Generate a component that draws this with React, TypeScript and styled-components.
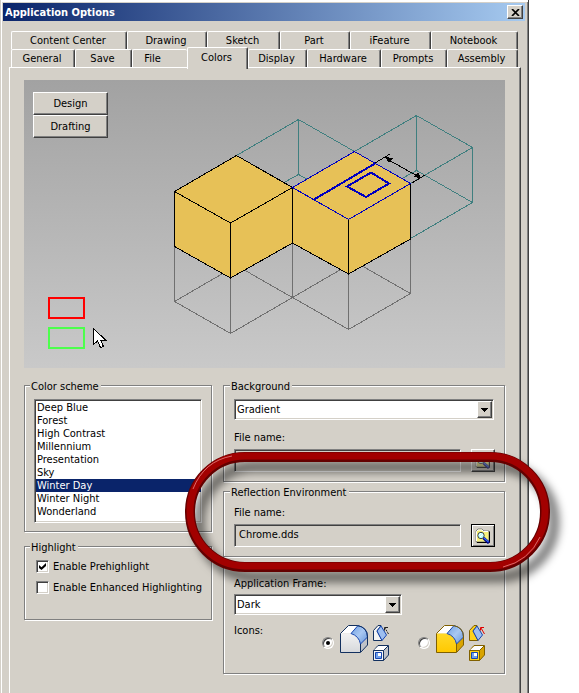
import React from 'react';
import styled, { createGlobalStyle } from 'styled-components';

const FACE = '#d4d0c8';
const SHADOW = '#808080';
const DARK = '#404040';
const NAVY = '#0a246a';

const GlobalStyle = createGlobalStyle`
  * { box-sizing: border-box; }
  body {
    margin: 0;
    background: #fff;
    color: #000;
    font: 11px/13px Tahoma, "DejaVu Sans Condensed", "DejaVu Sans", sans-serif;
  }
  button, input, select { font: inherit; color: inherit; margin: 0; }
`;

const Page = styled.main`
  min-height: 100vh;
  height: 100vh;
  padding-right: 50px;
  overflow: hidden;
`;

const Dialog = styled.section`
  position: relative;
  min-height: 100%;
  padding: 3px;
  background: ${FACE};
  border-right: 1px solid ${DARK};
  box-shadow: inset 1px 0 0 ${FACE}, inset 2px 2px 0 #fff, inset -1px 0 0 ${SHADOW};
`;

const TitleBar = styled.header`
  display: flex;
  align-items: center;
  justify-content: space-between;
  height: 18px;
  padding: 0 2px;
  background: linear-gradient(90deg, ${NAVY}, #a6caf0);
`;

const Title = styled.h1`
  margin: 0;
  color: #fff;
  font-size: 11px;
  line-height: 13px;
  font-weight: bold;
`;

const PushButton = styled.button`
  display: flex;
  align-items: center;
  justify-content: center;
  padding: 0;
  background: ${FACE};
  border: 1px solid;
  border-color: #fff ${DARK} ${DARK} #fff;
  border-radius: 0;
  box-shadow: inset -1px -1px 0 ${SHADOW};
`;

const CloseButton = styled(PushButton)`
  width: 16px;
  height: 14px;
`;

const Tabs = styled.div`
  padding: 10px 7px 0 8px;
`;

const TabRow = styled.div<{ $widths: number[] }>`
  display: grid;
  grid-template-columns: ${p => p.$widths.map(w => `minmax(0, ${w}fr)`).join(' ')};
  height: 18px;
`;

const Tab = styled.button<{ $selected?: boolean; $tail?: number }>`
  position: relative;
  z-index: ${p => (p.$selected ? 1 : 0)};
  min-width: 0;
  height: ${p => (p.$selected ? 22 : 18)}px;
  margin-top: ${p => (p.$selected ? -2 : 0)}px;
  padding: 0 ${p => p.$tail ?? 2}px ${p => (p.$selected ? 3 : 0)}px 0;
  white-space: nowrap;
  background: ${FACE};
  border: solid;
  border-width: 1px ${p => (p.$tail ? 0 : 1)}px 0 1px;
  border-color: #fff ${DARK} #fff #fff;
  border-radius: 2px 2px 0 0;
  box-shadow: ${p => (p.$tail ? 'none' : `inset -1px 0 0 ${SHADOW}`)};
`;

const Panel = styled.div`
  min-height: calc(100vh - 67px);
  margin: 0 4px 0 6px;
  padding: 12px 15px 19px 14px;
  border: solid;
  border-width: 1px 1px 0 1px;
  border-color: #fff ${DARK} #fff #fff;
  box-shadow: inset -1px 0 0 ${SHADOW};
`;

const Preview = styled.div`
  position: relative;
  height: 288px;
  padding: 12px 9px;
  background: linear-gradient(#a2a2a2, #c9c9c9);
`;

const Drawing = styled.svg`
  position: absolute;
  inset: 0;
  width: 100%;
  height: 100%;
`;

const ModeButtons = styled.div`
  position: relative;
  display: flex;
  flex-direction: column;
  width: 75px;
`;

const ModeButton = styled(PushButton)`
  height: 23px;
`;

const Columns = styled.div`
  display: grid;
  grid-template-columns: minmax(0, 188fr) minmax(0, 282fr);
  gap: 11px;
  margin-top: 11px;
`;

const Column = styled.div<{ $gap: number }>`
  display: flex;
  flex-direction: column;
  gap: ${p => p.$gap}px;
`;

const Group = styled.fieldset`
  min-width: 0;
  margin: 0;
  padding: 7px 10px 9px 10px;
  border: 1px solid ${SHADOW};
  box-shadow: 1px 1px 0 #fff, inset 1px 1px 0 #fff;
`;

const SchemeGroup = styled(Group)`
  padding: 7px 9px 8px;
`;

const FrameGroup = styled(Group)`
  margin-top: 6px;
  padding: 9px 10px 11px;
`;

const Legend = styled.legend`
  height: 13px;
  line-height: 15px;
  margin-left: -4px;
  padding: 0 2px 0 1px;
  background: ${FACE};
`;

const sunken = `
  border: 1px solid;
  border-color: ${SHADOW} #fff #fff ${SHADOW};
  border-radius: 0;
  outline: 0;
`;

const SchemeList = styled.select`
  display: block;
  width: 100%;
  height: 124px;
  padding: 1px 0 0 1px;
  overflow: hidden;
  background: #fff;
  ${sunken}
  box-shadow: inset 1px 1px 0 ${DARK}, inset -1px -1px 0 ${FACE};

  option {
    height: 13px;
    min-height: 13px;
    padding: 0 1px;
    line-height: 13px;
    color: #000;
  }
  option:checked {
    background: ${NAVY} linear-gradient(${NAVY}, ${NAVY});
    color: #fff;
    -webkit-text-fill-color: #fff;
  }
`;

const Checks = styled.div`
  display: flex;
  flex-direction: column;
  gap: 8px;
  min-height: 51px;
  margin-left: 2px;
`;

const CheckLabel = styled.label`
  display: flex;
  align-items: center;
  gap: 4px;
  height: 13px;
  white-space: nowrap;
`;

const CheckBox = styled.input`
  appearance: none;
  display: grid;
  place-items: center;
  flex: none;
  width: 13px;
  height: 13px;
  background: #fff;
  ${sunken}
  box-shadow: inset 1px 1px 0 ${DARK}, inset -1px -1px 0 ${FACE};

  &:checked::after {
    content: '';
    width: 7px;
    height: 7px;
    background: #000;
    clip-path: polygon(0 29%, 36% 60%, 100% 0, 100% 43%, 36% 100%, 0 71%);
  }
`;

const SelectBox = styled.div<{ $w?: number }>`
  position: relative;
  width: ${p => (p.$w ? `${p.$w}px` : '100%')};
  height: 21px;
`;

const Select = styled.select`
  appearance: none;
  display: block;
  width: 100%;
  height: 100%;
  padding: 0 20px 0 2px;
  background: #fff;
  ${sunken}
  box-shadow: inset 1px 1px 0 ${DARK}, inset -1px -1px 0 ${FACE};
`;

const SelectArrow = styled.span`
  position: absolute;
  top: 2px;
  right: 2px;
  bottom: 2px;
  display: grid;
  place-items: center;
  width: 15px;
  background: ${FACE};
  border: 1px solid;
  border-color: #fff ${DARK} ${DARK} #fff;
  box-shadow: inset -1px -1px 0 ${SHADOW};
  pointer-events: none;
`;

const FieldLabel = styled.label<{ $top?: number; $bottom?: number }>`
  display: block;
  height: 14px;
  line-height: 15px;
  margin: ${p => p.$top ?? 0}px 0 ${p => p.$bottom ?? 5}px;
`;

const FileRow = styled.div`
  display: flex;
  gap: 10px;
  height: 23px;
  margin-right: -1px;
`;

const FileInput = styled.input`
  flex: 1;
  min-width: 0;
  padding: 0 4px 2px;
  background: ${FACE};
  ${sunken}
  box-shadow: inset 1px 1px 0 ${DARK};
`;

const BrowseButton = styled(PushButton)<{ $default?: boolean }>`
  width: 24px;
  ${p =>
    p.$default
      ? `border-color: #000; box-shadow: inset 1px 1px 0 #fff, inset -1px -1px 0 ${SHADOW};`
      : 'color: #808080;'}
`;

const IconsRow = styled.div`
  display: flex;
  align-items: flex-start;
  margin-top: 9px;
`;

const IconsCaption = styled.span`
  flex: none;
  width: 88px;
`;

const IconChoice = styled.label`
  display: flex;
  flex: none;
  align-items: center;
  gap: 6px;
  height: 38px;

  & + & {
    margin-left: 28px;
  }
`;

const Radio = styled.input`
  appearance: none;
  display: grid;
  place-items: center;
  flex: none;
  width: 12px;
  height: 12px;
  background: #fff;
  border: 1px solid;
  border-color: ${SHADOW} #fff #fff ${SHADOW};
  border-radius: 50%;
  box-shadow: inset 1px 1px 0 ${DARK}, inset -1px -1px 0 ${FACE};

  &:checked::after {
    content: '';
    width: 4px;
    height: 4px;
    border-radius: 50%;
    background: #000;
  }
`;

const Callout = styled.svg`
  position: absolute;
  top: 440px;
  left: 170px;
  width: calc(100% - 133px);
  height: 160px;
  overflow: visible;
  pointer-events: none;
`;

function CloseGlyph() {
  return (
    <svg width="9" height="7" viewBox="0 0 9 7" aria-hidden="true">
      <path d="M1 0L8 7M8 0L1 7" stroke="#000" strokeWidth="1.7" />
    </svg>
  );
}

function BrowseGlyph({ muted }: { muted?: boolean }) {
  return (
    <svg width="16" height="16" viewBox="0 0 16 16" opacity={muted ? 0.6 : 1} aria-hidden="true">
      <path d="M1 14V3l2-2h4l2 2h5v11z" fill="#f7f17a" stroke={SHADOW} />
      <path d="M1.5 13V3.5L3 2h4l1.500 1.500H13" fill="none" stroke="#fff" />
      <path d="M14.500 3.500v11H2" fill="none" stroke="#000" />
      <circle cx="6" cy="7.500" r="3.200" fill="#b9ffff" stroke={DARK} />
      <path d="M4 7l2-2M5 9l3-3" stroke="#fff" />
      <path d="M8.500 10L14 15" stroke="#000080" strokeWidth="3" />
      <path d="M9 10l4.500 4" stroke="#2f6bff" strokeWidth="1.200" />
    </svg>
  );
}

function ModelIcons({ amber }: { amber?: boolean }) {
  const id = amber ? 'amber' : 'silver';
  const line = amber ? '#806000' : '#12305f';
  const side = amber ? '#d9a400' : '#bfc2c8';
  const pale = amber ? '#ffd21a' : '#f4f4f4';
  const arrow = amber ? '#e00000' : '#222';
  return (
    <svg width="50" height="38" viewBox="0 0 50 38" aria-hidden="true">
      <defs>
        <linearGradient id={`${id}-front`} x1="0" y1="0" x2="0" y2="1">
          <stop offset="0" stopColor={amber ? '#ffd92a' : '#f2f2f2'} />
          <stop offset="1" stopColor={amber ? '#ffc800' : '#d6d8db'} />
        </linearGradient>
        <linearGradient id={`${id}-round`} x1="0" y1="0" x2="1" y2="1">
          <stop offset="0" stopColor="#6e9ee0" />
          <stop offset=".5" stopColor="#a9c8f2" />
          <stop offset="1" stopColor="#6796da" />
        </linearGradient>
      </defs>
      <path d="M.5 9.500L8.500 1.500H18L12 9.500z" fill="#fff" />
      <path d="M20.500 20L27.500 13v8l-7 7.500z" fill={side} />
      <path d="M.5 9.500H9Q20.500 10.500 20.500 21v7.500H.5z" fill={`url(#${id}-front)`} />
      <path d="M11 9.500L18 1.500Q27.500 4 27.500 13L20.500 20Q19 12 11 9.500z" fill={`url(#${id}-round)`} stroke="#1746b0" />
      <path d="M.5 28.500V9.500L8.500 1.500H17Q27.500 3 27.500 13v8l-7 7.500z" fill="none" stroke={line} />
      <path d="M20.500 28V20" stroke={line} />
      <path d="M33.500 16.500V6.500L38 1.500H41L37 7L42 16.500z" fill={pale} stroke={line} />
      <path d="M37 7L41 2L46.500 11L42 16.500z" fill="#9dbef0" stroke="#1746b0" />
      <path d="M48.500 10L45 4" stroke={arrow} strokeDasharray={amber ? undefined : '2 1'} />
      <path d="M44.500 6.500V3.500H48" fill="none" stroke={arrow} />
      <path d="M33.500 26.500L38 21.500H48.500V31L43.500 36.500z" fill={side} stroke={line} />
      <path d="M34 26L38.500 22H48L44 26z" fill="#fff" />
      <path d="M33.500 26.500h10v10h-10z" fill={pale} stroke={line} />
      <path d="M43.500 26.500L48 22" stroke={line} />
      <path d="M35.500 28.500h6v6h-6z" fill="#6fa0ec" stroke="#1746b0" />
      <path d="M38 29h3v3h-3z" fill="#fff" />
    </svg>
  );
}

function PreviewDrawing() {
  return (
    <Drawing viewBox="24 80 481 288" preserveAspectRatio="xMidYMid meet" shapeRendering="crispEdges" fill="none" aria-hidden="true">
      <g stroke="#707070">
        <path d="M174.500 246V301.500L230.500 333.500L292.500 297.500L354.500 261.500L410.500 293.500V239" />
        <path d="M174.500 301.500L236.500 265.500L292.500 297.500L348.500 329.500L410.500 293.500" />
        <path d="M230.500 278V333M292.500 243V298M348.500 274V329" />
      </g>
      <g stroke="#3f7f7f">
        <path d="M236.500 155.500L298.500 119.500L354.500 151.500L416.500 115.500L472.500 147.500V202.500L410.500 238.500" />
        <path d="M298.500 119.500V174.500M285 182L298.500 174.500L307 179" />
        <path d="M416.500 115.500V170.500M403 178L416.500 170.500L472.500 202.500M472.500 147.500L410.500 183.500" />
      </g>
      <path d="M236.500 155.500L292.500 187.500L354.500 151.500L410.500 183.500V239L348.500 274L292.500 243L230.500 278L174.500 246.500V191.500z" fill="#e7c157" />
      <g stroke="#000">
        <path d="M236.500 155.500L174.500 191.500V246.500L230.500 278L292.500 243V187.500z" />
        <path d="M174.500 191.500L230.500 223L292.500 187.500M230.500 223V278" />
        <path d="M292.500 243L348.500 274L410.500 239V183.500M348.500 219V274" />
        <path d="M375 163L390 154M412 183L425 175M387 159L419 177" />
      </g>
      <path d="M385 157l8 1-4 5zM421 178l-8-1 5-5z" fill="#000" />
      <path d="M292.500 187.500L354.500 151.500L410.500 183.500L348.500 219.500z" stroke="#0000c0" />
      <path d="M314 199.500L375 163.500M347 186.500L371 172.500L389 183.500L366 197z" stroke="#0000c0" strokeWidth="2" />
      <path d="M49 298h35v20H49z" stroke="#f00" strokeWidth="2" />
      <path d="M49 328h35v20H49z" stroke="#4cff4c" strokeWidth="2" />
      <path d="M93.500 328.500v16l4-3.500 3 6.500 3-1-3-6.500h5z" fill="#fff" stroke="#000" />
    </Drawing>
  );
}

function CalloutRing() {
  return (
    <Callout aria-hidden="true">
      <defs>
        <filter id="ring-shadow" x="-10%" y="-20%" width="125%" height="150%">
          <feGaussianBlur stdDeviation="4" />
        </filter>
        <filter id="ring-edge" x="-5%" y="-10%" width="110%" height="120%">
          <feGaussianBlur stdDeviation="0.7" />
        </filter>
      </defs>
      <svg x="20" y="17" width="calc(100% - 40px)" height="110" overflow="visible" fill="none">
        <rect x="9" y="10" width="100%" height="110" rx="55" stroke="#000" strokeOpacity=".5" strokeWidth="11" filter="url(#ring-shadow)" />
        <rect width="100%" height="110" rx="55" stroke="#640000" strokeWidth="10" />
        <rect y="-1" width="100%" height="110" rx="55" stroke="#a20000" strokeWidth="7" filter="url(#ring-edge)" />
        <path d="M3 32Q14 4 42 -1" stroke="#ffb0b0" strokeWidth="1" opacity=".6" />
        <svg x="100%" overflow="visible">
          <path d="M-5 80Q-16 104 -42 110" stroke="#ffb0b0" strokeWidth="1" opacity=".6" />
        </svg>
      </svg>
    </Callout>
  );
}

function Dropdown({ id, value, width }: { id?: string; value: string; width?: number }) {
  return (
    <SelectBox $w={width}>
      <Select id={id} defaultValue={value} aria-label={id ? undefined : 'Background'}>
        <option>{value}</option>
      </Select>
      <SelectArrow>
        <svg width="7" height="4" viewBox="0 0 7 4" shapeRendering="crispEdges" aria-hidden="true">
          <path d="M0 0h7L3.500 4z" />
        </svg>
      </SelectArrow>
    </SelectBox>
  );
}

const schemes = ['Deep Blue', 'Forest', 'High Contrast', 'Millennium', 'Presentation', 'Sky', 'Winter Day', 'Winter Night', 'Wonderland'];

interface TabInfo {
  name: string;
  w: number;
  tail?: number;
  selected?: boolean;
}

const tabRows: TabInfo[][] = [
  [
    { name: 'Content Center', w: 116 },
    { name: 'Drawing', w: 80 },
    { name: 'Sketch', w: 73 },
    { name: 'Part', w: 70 },
    { name: 'iFeature', w: 81 },
    { name: 'Notebook', w: 87 },
  ],
  [
    { name: 'General', w: 64 },
    { name: 'Save', w: 57 },
    { name: 'File', w: 55, tail: 15 },
    { name: 'Colors', w: 61, selected: true },
    { name: 'Display', w: 59 },
    { name: 'Hardware', w: 74 },
    { name: 'Prompts', w: 66 },
    { name: 'Assembly', w: 71 },
  ],
];

export default function App() {
  return (
    <Page>
      <GlobalStyle />
      <Dialog aria-label="Application Options">
        <TitleBar>
          <Title>Application Options</Title>
          <CloseButton aria-label="Close">
            <CloseGlyph />
          </CloseButton>
        </TitleBar>

        <Tabs role="tablist">
          {tabRows.map(row => (
            <TabRow key={row[0].name} $widths={row.map(t => t.w)}>
              {row.map(t => (
                <Tab key={t.name} role="tab" aria-selected={!!t.selected} $selected={t.selected} $tail={t.tail}>
                  {t.name}
                </Tab>
              ))}
            </TabRow>
          ))}
        </Tabs>

        <Panel role="tabpanel">
          <Preview>
            <PreviewDrawing />
            <ModeButtons>
              <ModeButton>Design</ModeButton>
              <ModeButton>Drafting</ModeButton>
            </ModeButtons>
          </Preview>

          <Columns>
            <Column $gap={8}>
              <SchemeGroup>
                <Legend>Color scheme</Legend>
                <SchemeList size={9} defaultValue="Winter Day" aria-label="Color scheme">
                  {schemes.map(s => <option key={s}>{s}</option>)}
                </SchemeList>
              </SchemeGroup>
              <SchemeGroup>
                <Legend>Highlight</Legend>
                <Checks>
                  <CheckLabel><CheckBox type="checkbox" defaultChecked />Enable Prehighlight</CheckLabel>
                  <CheckLabel><CheckBox type="checkbox" />Enable Enhanced Highlighting</CheckLabel>
                </Checks>
              </SchemeGroup>
            </Column>

            <Column $gap={3}>
              <Group>
                <Legend>Background</Legend>
                <Dropdown value="Gradient" />
                <FieldLabel htmlFor="bg-file" $top={10}>File name:</FieldLabel>
                <FileRow>
                  <FileInput id="bg-file" readOnly />
                  <BrowseButton aria-label="Browse background file" disabled><BrowseGlyph muted /></BrowseButton>
                </FileRow>
              </Group>
              <Group>
                <Legend>Reflection Environment</Legend>
                <FieldLabel htmlFor="env-file">File name:</FieldLabel>
                <FileRow>
                  <FileInput id="env-file" readOnly defaultValue="Chrome.dds" />
                  <BrowseButton aria-label="Browse environment file" $default><BrowseGlyph /></BrowseButton>
                </FileRow>
              </Group>
              <FrameGroup>
                <FieldLabel htmlFor="app-frame" $bottom={4}>Application Frame:</FieldLabel>
                <Dropdown id="app-frame" value="Dark" width={168} />
                <IconsRow role="radiogroup" aria-labelledby="icons-caption">
                  <IconsCaption id="icons-caption">Icons:</IconsCaption>
                  <IconChoice><Radio type="radio" name="icons" aria-label="Silver" defaultChecked /><ModelIcons /></IconChoice>
                  <IconChoice><Radio type="radio" name="icons" aria-label="Amber" /><ModelIcons amber /></IconChoice>
                </IconsRow>
              </FrameGroup>
            </Column>
          </Columns>
        </Panel>
        <CalloutRing />
      </Dialog>
    </Page>
  );
}
